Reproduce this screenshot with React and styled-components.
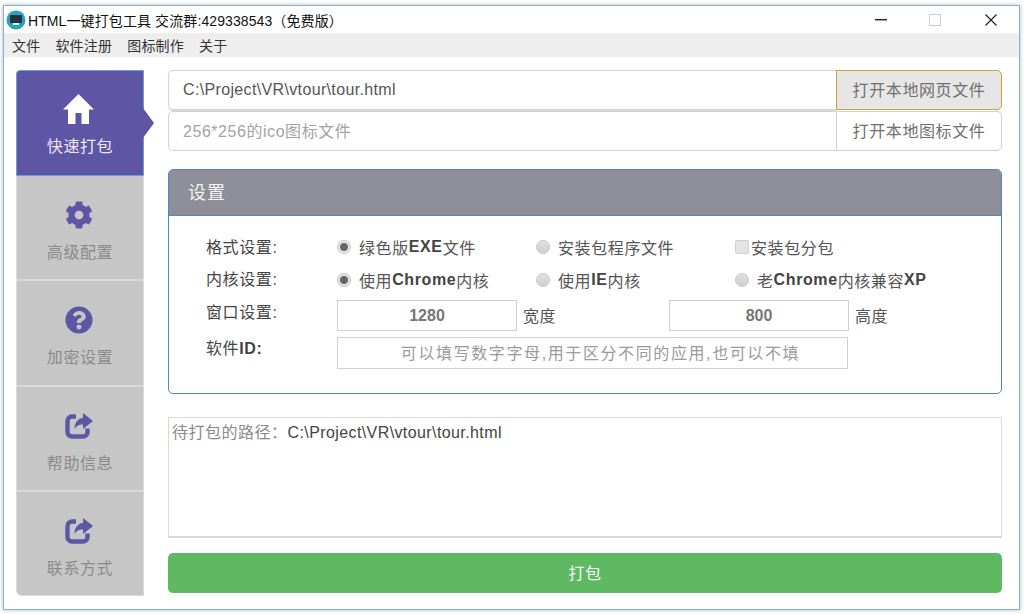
import React from 'react';
import styled, { createGlobalStyle } from 'styled-components';
import { FaCog, FaQuestionCircle } from 'react-icons/fa';

const GlobalStyle = createGlobalStyle`
  html, body { margin: 0; padding: 0; background: #fff; }
  body { font-family: "Liberation Sans", "Noto Sans CJK SC", sans-serif; }
  * { box-sizing: border-box; }
`;

const HomeIcon = () => (
  <svg width="31" height="30" viewBox="0 0 31 30" fill="#fff">
    <path d="M15.5 0 L31 15.5 L26 15.5 L26 30 L18.5 30 L18.5 19 L12.5 19 L12.5 30 L5 30 L5 15.5 L0 15.5 Z" />
  </svg>
);

const ShareIcon = () => (
  <svg width="28" height="28" viewBox="0 -1 28 28">
    <path d="M11 3.5 H7 A4.5 4.5 0 0 0 2.5 8 V19 A4.5 4.5 0 0 0 7 23.5 H18 A4.5 4.5 0 0 0 22.5 19 V15.5" fill="none" stroke="#5f55a5" strokeWidth="4.4" />
    <path d="M18 0 L28 8 L18 16 V11.5 C13.5 11.5 10.8 13 9.5 16.5 C9.3 10 12.5 5.5 18 5 Z" fill="#5f55a5" />
  </svg>
);

const navItems = [
  { label: '快速打包', icon: <HomeIcon />, active: true },
  { label: '高级配置', icon: <FaCog size={28} color="#5f55a5" /> },
  { label: '加密设置', icon: <FaQuestionCircle size={28} color="#5f55a5" /> },
  { label: '帮助信息', icon: <ShareIcon /> },
  { label: '联系方式', icon: <ShareIcon /> },
];

function App() {
  return (
    <Page>
      <GlobalStyle />
      <Window>
        <TitleBar>
          <AppLogo>
            <svg width="20" height="20" viewBox="0 0 20 20">
              <circle cx="10" cy="10" r="9.5" fill="#25a3bd" />
              <rect x="4" y="5" width="12" height="8" rx="1" fill="#26323f" />
              <rect x="7" y="13" width="6" height="2" fill="#e8eef0" />
            </svg>
          </AppLogo>
          <TitleText>HTML一键打包工具 交流群:429338543（免费版）</TitleText>
          <WindowControls>
            <svg width="12" height="2" viewBox="0 0 12 2"><rect width="12" height="1.4" fill="#222" /></svg>
            <RestoreBox />
            <svg width="12" height="12" viewBox="0 0 12 12"><path d="M0.5 0.5 L11.5 11.5 M11.5 0.5 L0.5 11.5" stroke="#222" strokeWidth="1.2" /></svg>
          </WindowControls>
        </TitleBar>
        <MenuBar>
          <span>文件</span>
          <span>软件注册</span>
          <span>图标制作</span>
          <span>关于</span>
        </MenuBar>
        <Content>
          <Sidebar>
            {navItems.map((item) => (
              <NavItem key={item.label} $active={item.active}>
                <NavIcon>{item.icon}</NavIcon>
                <NavLabel $active={item.active}>{item.label}</NavLabel>
              </NavItem>
            ))}
          </Sidebar>
          <Main>
            <FileGroup>
              <FileRow>
                <FileField>C:\Project\VR\vtour\tour.html</FileField>
                <FileButton $focused>打开本地网页文件</FileButton>
              </FileRow>
              <FileRow>
                <FileField $placeholder>256*256的ico图标文件</FileField>
                <FileButton>打开本地图标文件</FileButton>
              </FileRow>
            </FileGroup>

            <Panel>
              <PanelHeader>设置</PanelHeader>
              <PanelBody>
                <SettingRow>
                  <SettingLabel $lift={4}>格式设置:</SettingLabel>
                  <Option><Radio $checked />绿色版<b>EXE</b>文件</Option>
                  <Option><Radio />安装包程序文件</Option>
                  <Option><CheckBox />安装包分包</Option>
                </SettingRow>
                <SettingRow>
                  <SettingLabel $lift={6}>内核设置:</SettingLabel>
                  <Option><Radio $checked />使用<b>Chrome</b>内核</Option>
                  <Option><Radio />使用<b>IE</b>内核</Option>
                  <Option><Radio />老<b>Chrome</b>内核兼容<b>XP</b></Option>
                </SettingRow>
                <SizeRow>
                  <SettingLabel $lift={10}>窗口设置:</SettingLabel>
                  <SizeField>1280</SizeField>
                  <Unit>宽度</Unit>
                  <SizeField>800</SizeField>
                  <Unit>高度</Unit>
                </SizeRow>
                <IdRow>
                  <SettingLabel $lift={12}>软件<b>ID:</b></SettingLabel>
                  <IdField>可以填写数字字母,用于区分不同的应用,也可以不填</IdField>
                </IdRow>
              </PanelBody>
            </Panel>

            <LogBox>待打包的路径：<LogPath>C:\Project\VR\vtour\tour.html</LogPath></LogBox>
            <PackButton>打包</PackButton>
          </Main>
        </Content>
      </Window>
    </Page>
  );
}

const Page = styled.div`
  width: 1024px;
  height: 614px;
  padding: 5px 4px 4px 3px;
  overflow: hidden;
  background: #fff;
`;

const Window = styled.div`
  width: 1017px;
  height: 605px;
  border: 1px solid #7fb2dc;
  box-shadow: 0 0 4px rgba(0, 0, 0, 0.3);
  background: #fff;
  display: flex;
  flex-direction: column;
`;

const TitleBar = styled.div`
  height: 27px;
  flex: none;
  display: flex;
  align-items: center;
  padding-left: 2px;
`;

const AppLogo = styled.div`
  width: 20px;
  height: 20px;
  margin-right: 2px;
  display: flex;
`;

const TitleText = styled.div`
  font-size: 14px;
  letter-spacing: 0.1px;
  color: #111;
  white-space: nowrap;
`;

const WindowControls = styled.div`
  margin-left: auto;
  padding-right: 22px;
  display: flex;
  align-items: center;
  gap: 43px;
`;

const RestoreBox = styled.div`
  width: 12px;
  height: 12px;
  margin: 0 1px 0 -1px;
  border: 1px solid #ccc;
`;

const MenuBar = styled.div`
  height: 24px;
  flex: none;
  background: #eeeeee;
  display: flex;
  align-items: center;
  padding-left: 8px;
  gap: 15px;
  font-size: 14px;
  letter-spacing: 0.2px;
  color: #333;
`;

const Content = styled.div`
  flex: 1;
  display: flex;
  padding: 13px 17px 12px 12px;
  gap: 24px;
`;

const Sidebar = styled.div`
  width: 128px;
  flex: none;
  display: flex;
  flex-direction: column;
  height: 526px;
`;

const NavItem = styled.div`
  position: relative;
  flex: ${(p) => (p.$active ? '0 0 106px' : '1')};
  display: flex;
  flex-direction: column;
  align-items: center;
  padding-top: 23px;
  background: ${(p) => (p.$active ? '#5f55a5' : '#c6c6c6')};
  border: 1px solid ${(p) => (p.$active ? '#6a9fd0' : '#dadada')};
  border-top-width: ${(p) => (p.$active ? '1px' : '0')};
  border-bottom-width: ${(p) => (p.$active ? '1px' : '2px')};
  color: ${(p) => (p.$active ? '#ece9f5' : '#8a8a8a')};
  &:first-child { border-radius: 4px 0 0 0; }
  &:last-child { border-radius: 0 0 0 6px; border-bottom-width: 1px; }
  ${(p) => p.$active && `
    &::after {
      content: '';
      position: absolute;
      top: 37px;
      right: -11px;
      border-left: 11px solid #5f55a5;
      border-top: 15px solid transparent;
      border-bottom: 15px solid transparent;
    }
  `}
`;

const NavIcon = styled.div`
  height: 30px;
  padding-right: 3px;
  display: flex;
  align-items: flex-end;
  justify-content: center;
`;

const NavLabel = styled.div`
  margin-top: ${(p) => (p.$active ? '12px' : '13px')};
  font-size: 16px;
  line-height: 22px;
  letter-spacing: 0.6px;
`;

const Main = styled.div`
  flex: 1;
  display: flex;
  flex-direction: column;
`;

const FileGroup = styled.div`
  display: flex;
  flex-direction: column;
  gap: 1px;
`;

const FileRow = styled.div`
  display: flex;
  height: 40px;
`;

const FileField = styled.div`
  flex: 1;
  display: flex;
  align-items: center;
  padding: 0 0 ${(p) => (p.$placeholder ? '3px' : '1px')} 14px;
  font-size: 16px;
  letter-spacing: ${(p) => (p.$placeholder ? '0.55px' : '0.35px')};
  color: ${(p) => (p.$placeholder ? '#a3a3a3' : '#555')};
  border: 1px solid #d4d4d4;
  border-right: 0;
  border-radius: 5px 0 0 5px;
  box-shadow: ${(p) => (p.$placeholder ? 'none' : '0 1px 1px rgba(0, 0, 0, 0.18)')};
`;

const FileButton = styled.div`
  width: 166px;
  flex: none;
  display: flex;
  align-items: center;
  justify-content: center;
  padding-bottom: 3px;
  font-size: 16px;
  letter-spacing: 0.6px;
  color: #707070;
  background: ${(p) => (p.$focused ? '#e6e6e6' : '#fff')};
  border: 1px solid ${(p) => (p.$focused ? '#d39e3a' : '#cfcfcf')};
  border-radius: 0 5px 5px 0;
`;

const Panel = styled.div`
  margin-top: 18px;
  height: 225px;
  flex: none;
  border: 1px solid #4a8ac4;
  border-radius: 5px;
  overflow: hidden;
`;

const PanelHeader = styled.div`
  height: 46px;
  display: flex;
  align-items: center;
  padding: 0 0 3px 19px;
  background: #8e8e98;
  border-bottom: 1px solid #4a8ac4;
  color: #f2f2f2;
  font-size: 18px;
  letter-spacing: 1px;
`;

const PanelBody = styled.div`
  padding: 15px 0 0 37px;
  font-size: 16px;
  color: #555;
  b { color: #444; }
`;

const SettingRow = styled.div`
  display: grid;
  grid-template-columns: 131px 199px 199px 1fr;
  align-items: center;
  height: 33px;
`;

const SizeRow = styled.div`
  display: grid;
  grid-template-columns: 131px 180px 152px 180px 1fr;
  align-items: center;
  height: 31px;
  margin-top: 3px;
`;

const IdRow = styled.div`
  display: grid;
  grid-template-columns: 131px 511px;
  align-items: center;
  height: 32px;
  margin-top: 6px;
`;

const SettingLabel = styled.div`
  letter-spacing: 0.6px;
  color: #444;
  margin-top: -${(p) => p.$lift}px;
`;

const Option = styled.div`
  display: flex;
  align-items: center;
  padding-bottom: 1px;
  letter-spacing: 0.6px;
  white-space: nowrap;
`;

const Radio = styled.span`
  width: 14px;
  height: 14px;
  margin-right: 8px;
  flex: none;
  border-radius: 50%;
  background: ${(p) => (p.$checked
    ? 'radial-gradient(circle, #666 0 3.5px, #e2e2e2 4.5px)'
    : 'linear-gradient(#e0e0e0, #d0d0d0)')};
  border: 1px solid #c8c8c8;
`;

const CheckBox = styled.span`
  width: 14px;
  height: 14px;
  margin-right: 2px;
  flex: none;
  border-radius: 2px;
  background: #e4e4e4;
  border: 1px solid #cfcfcf;
`;

const SizeField = styled.div`
  height: 31px;
  display: flex;
  align-items: center;
  justify-content: center;
  border: 1px solid #cfcfcf;
  font-size: 16px;
  font-weight: 700;
  color: #777;
`;

const Unit = styled.div`
  padding: 0 0 1px 6px;
  letter-spacing: 0.6px;
`;

const IdField = styled.div`
  height: 32px;
  display: flex;
  align-items: center;
  justify-content: center;
  padding: 0 0 2px 16px;
  border: 1px solid #cfcfcf;
  font-size: 16px;
  letter-spacing: 1.6px;
  color: #9a9a9a;
  white-space: nowrap;
`;

const LogBox = styled.div`
  margin-top: 23px;
  height: 121px;
  flex: none;
  padding: 5px 3px;
  border: 1px solid #d8d8d8;
  border-bottom-width: 2px;
  font-size: 16px;
  line-height: 20px;
  letter-spacing: 0.5px;
  color: #8a8a8a;
`;

const LogPath = styled.span`
  color: #444;
  letter-spacing: 0.4px;
`;

const PackButton = styled.div`
  margin-top: 15px;
  height: 40px;
  flex: none;
  display: flex;
  align-items: center;
  justify-content: center;
  padding-bottom: 3px;
  background: #5fb963;
  border-radius: 5px;
  color: #f4fbf4;
  font-size: 16px;
  letter-spacing: 0.5px;
`;

export default App;
